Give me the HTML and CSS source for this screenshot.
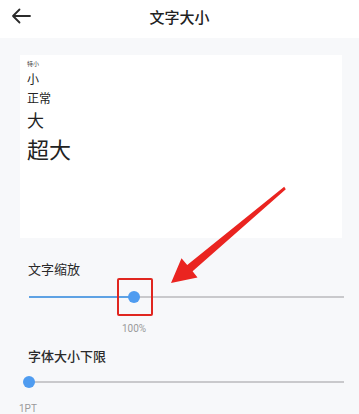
FILE: index.html
```html
<!DOCTYPE html>
<html lang="zh">
<head>
<meta charset="utf-8">
<link rel="stylesheet" href="styles.css">
</head>
<body>
<header class="bar">
  <svg class="back" width="20" height="16" viewBox="0 0 20 16"><path d="M19 8H2M8.5 1.5L2 8l6.5 6.5" fill="none" stroke="#2b2b2b" stroke-width="1.8" stroke-linecap="round" stroke-linejoin="round"/></svg>
  <h1 class="title">文字大小</h1>
</header>
<main class="page">
  <section class="card">
    <div class="s-xs">特小</div>
    <div class="s-s">小</div>
    <div class="s-m">正常</div>
    <div class="s-l">大</div>
    <div class="s-xl">超大</div>
  </section>
  <section class="group g1">
    <div class="label">文字缩放</div>
    <div class="slider">
      <div class="fill" style="width:105px"></div>
      <div class="knob" style="left:105px"></div>
    </div>
    <div class="value v1">100%</div>
  </section>
  <section class="group g2">
    <div class="label bold">字体大小下限</div>
    <div class="slider">
      <div class="fill" style="width:0"></div>
      <div class="knob" style="left:0"></div>
    </div>
    <div class="value v2">1PT</div>
  </section>
</main>
<div class="hl-box"></div>
<svg class="hl-arrow" width="359" height="414" viewBox="0 0 359 414"><polygon points="285.8,189.2 192.6,271.3 197.5,277.5 171,283 181.5,258.2 187.2,264.9 284.2,186.8" fill="#ea2420"/></svg>
</body>
</html>
```
FILE: styles.css
```css
html, body {
  margin: 0;
  padding: 0;
}
body {
  width: 359px;
  height: 414px;
  overflow: hidden;
  background: #f7f8fa;
  font-family: "Noto Sans CJK SC", "Noto Sans", sans-serif;
  color: #222;
  position: relative;
}
.bar {
  height: 38px;
  background: #fff;
  display: flex;
  align-items: center;
  justify-content: center;
  position: relative;
}
.back {
  position: absolute;
  left: 11px;
  top: 8px;
}
.title {
  margin: 0;
  font-size: 15px;
  font-weight: 500;
  line-height: 20px;
  color: #222;
  margin-top: -4px;
}
.page {
  display: flex;
  flex-direction: column;
}
.card {
  margin: 17px 17px 0 20px;
  background: #fff;
  padding: 5px 7px 76px;
  display: flex;
  flex-direction: column;
  color: #222;
}
.s-xs { font-size: 6px; line-height: 8px; color: #444; }
.s-s { font-size: 12px; line-height: 16px; margin-top: 3px; }
.s-m { font-size: 12px; line-height: 16px; margin-top: 3px; }
.s-l { font-size: 17px; line-height: 22px; margin-top: 3px; }
.s-xl { font-size: 22px; line-height: 28px; margin-top: 3px; }
.group {
  display: flex;
  flex-direction: column;
  padding: 0 15px 0 29px;
}
.g1 { margin-top: 22px; }
.g2 { margin-top: 12px; }
.label {
  font-size: 13px;
  line-height: 18px;
  color: #2a2a2a;
  margin-left: -1px;
}
.label.bold { font-weight: 500; }
.slider {
  position: relative;
  height: 2px;
  background: #c9c9cc;
}
.g1 .slider { margin-top: 18px; }
.g2 .slider { margin-top: 16px; }
.fill {
  height: 2px;
  background: #5ea2e4;
}
.knob {
  position: absolute;
  top: -5px;
  width: 12px;
  height: 12px;
  margin-left: -6px;
  border-radius: 50%;
  background: #4f9cf0;
}
.value {
  font-family: Roboto, "Noto Sans", sans-serif;
  font-size: 10px;
  line-height: 12px;
  color: #9a9a9a;
}
.v1 { margin-top: 25px; padding-left: 93px; }
.v2 { margin-top: 20px; margin-left: -10px; }
.hl-box {
  position: absolute;
  left: 117px;
  top: 278px;
  width: 32px;
  height: 34px;
  border: 2.5px solid #e0261f;
  border-radius: 2px;
}
.hl-arrow {
  position: absolute;
  left: 0;
  top: 0;
  pointer-events: none;
}
```
